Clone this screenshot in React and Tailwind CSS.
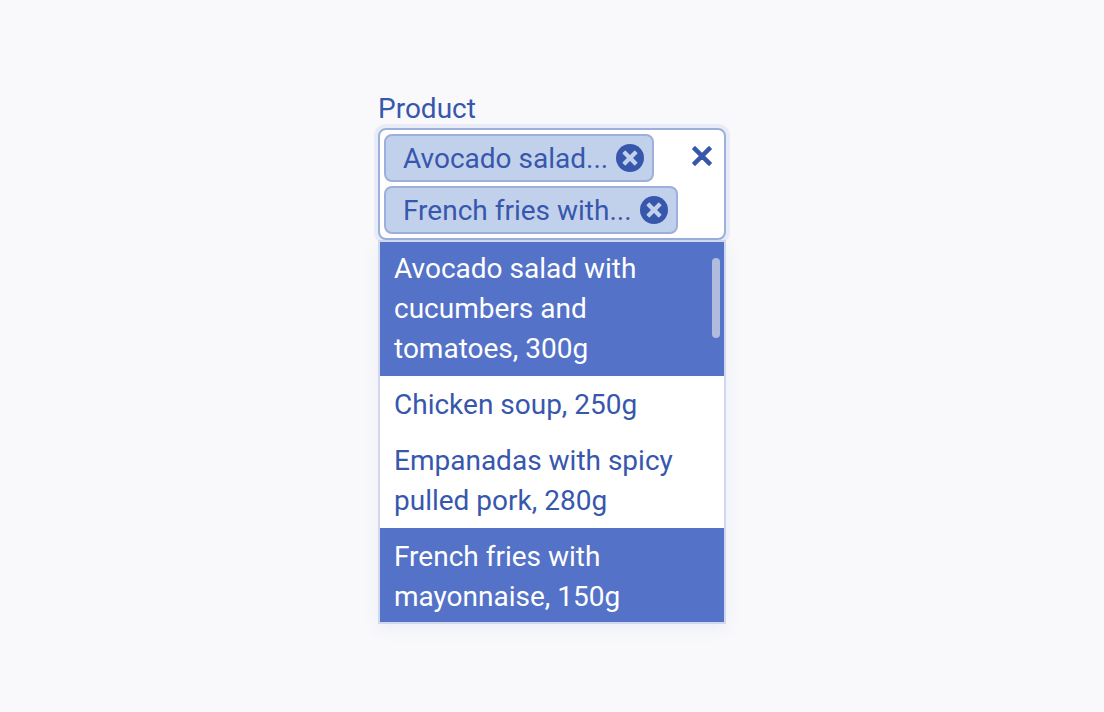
import { useState } from "react";

const products = [
  { name: "Avocado salad with cucumbers and tomatoes, 300g", short: "Avocado salad..." },
  { name: "Chicken soup, 250g", short: "Chicken soup..." },
  { name: "Empanadas with spicy pulled pork, 280g", short: "Empanadas with..." },
  { name: "French fries with mayonnaise, 150g", short: "French fries with..." },
];

function CircleCross() {
  return (
    <svg viewBox="-14 -14 28 28" className="size-7" aria-hidden="true">
      <circle r="14" fill="#3757ad" />
      <path
        d="M-4.7-6.8L0-2.1l4.7-4.7 2.1 2.1L2.1 0l4.7 4.7-2.1 2.1L0 2.1l-4.7 4.7-2.1-2.1L-2.1 0l-4.7-4.7z"
        fill="#c2d1eb"
        stroke="#c2d1eb"
        strokeWidth="1.3"
        strokeLinejoin="round"
      />
    </svg>
  );
}

function Cross() {
  return (
    <svg viewBox="-10 -10 20 20" className="size-5" aria-hidden="true">
      <path
        d="M-7-9.2L0-2.2l7-7 2.2 2.2L2.2 0l7 7-2.2 2.2L0 2.2l-7 7L-9.2 7l7-7-7-7z"
        fill="#3757ad"
        stroke="#3757ad"
        strokeWidth="1.4"
        strokeLinejoin="round"
      />
    </svg>
  );
}

export default function App() {
  const [selected, setSelected] = useState([0, 3]);
  const toggle = (i) =>
    setSelected((s) => (s.includes(i) ? s.filter((n) => n !== i) : [...s, i].sort()));

  return (
    <main className="flex min-h-screen justify-center bg-[#f9f9fb] px-4 py-[88px] font-['Roboto',sans-serif] text-[28px] leading-10 text-[#3757ad]">
      <div className="w-full max-w-[348px]">
        <div id="product-label" className="pt-0.5 leading-[38px]">
          Product
        </div>
        <div
          role="group"
          aria-labelledby="product-label"
          className="flex min-h-14 items-start justify-between rounded-lg border-2 border-[#9dafdb] bg-white p-1 ring-4 ring-[#e9ecf7]"
        >
          <div className="flex flex-col items-start gap-1">
            {selected.map((i) => (
              <span
                key={i}
                className="flex h-12 items-center gap-2 rounded-lg border-2 border-[#9dafdb] bg-[#c2d1eb] pr-2 pl-[17px] whitespace-nowrap"
              >
                <span className="pt-0.5">{products[i].short}</span>
                <button type="button" aria-label={`Remove ${products[i].name}`} onClick={() => toggle(i)}>
                  <CircleCross />
                </button>
              </span>
            ))}
          </div>
          <button type="button" aria-label="Clear all" className="p-2 pt-3" onClick={() => setSelected([])}>
            <Cross />
          </button>
        </div>
        <div className="relative border-2 border-[#d0d8ed] bg-white shadow-[0_4px_16px_rgba(80,100,220,0.08)]">
          <ul
            role="listbox"
            aria-multiselectable="true"
            aria-labelledby="product-label"
            className="max-h-[380px] overflow-y-auto [scrollbar-width:none]"
          >
            {products.map((product, i) => (
              <li key={product.name} role="presentation" className="first:-mt-0.5">
                <button
                  type="button"
                  role="option"
                  aria-selected={selected.includes(i)}
                  onClick={() => toggle(i)}
                  className="block w-full pt-[9px] pr-8 pb-[7px] pl-3.5 text-left aria-selected:bg-[#5472c7] aria-selected:text-white"
                >
                  {product.name}
                </button>
              </li>
            ))}
          </ul>
          <div className="absolute top-4 right-1 h-20 w-2 rounded-full bg-[#b0bbdd]" />
        </div>
      </div>
    </main>
  );
}
